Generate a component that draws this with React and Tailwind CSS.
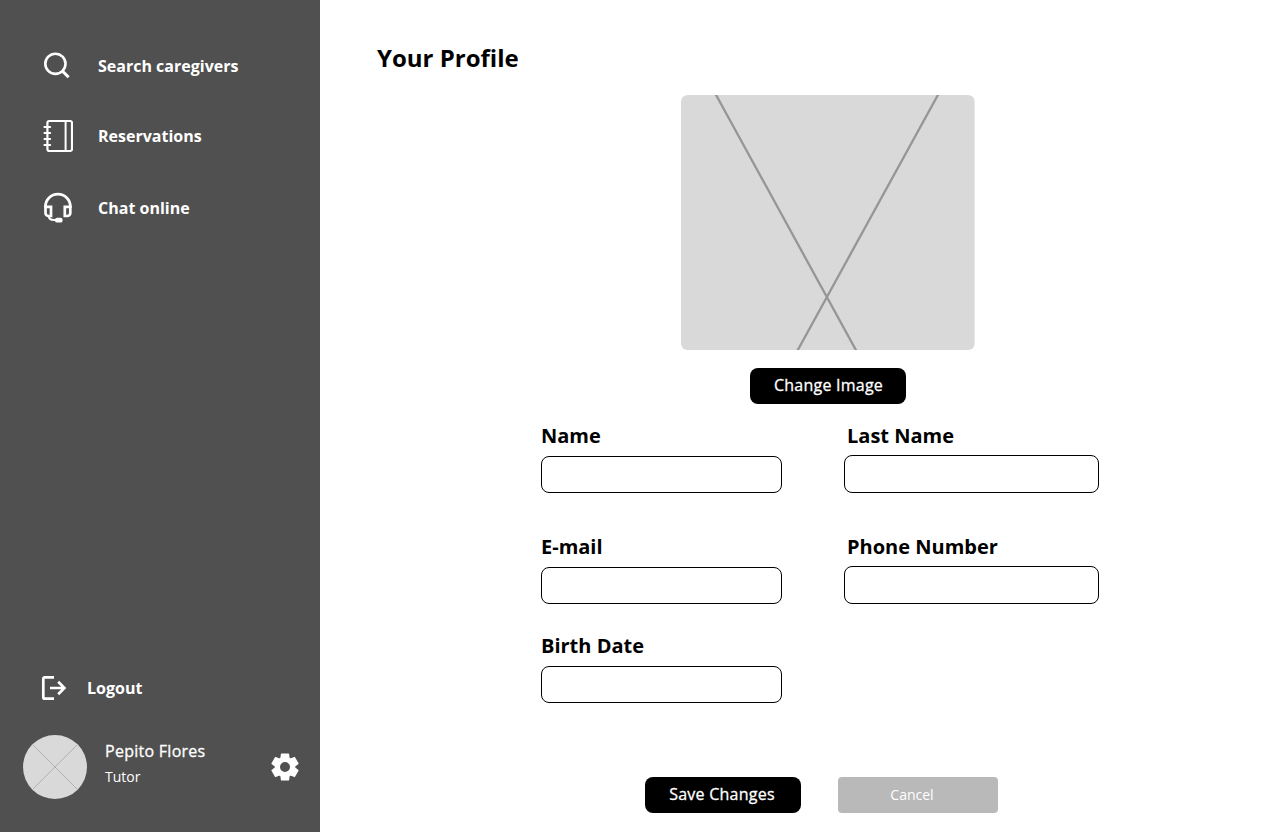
function SearchIcon() {
  return (
    <svg width="32" height="32" viewBox="0 0 32 32" fill="none" stroke="white" strokeWidth="2.6" className="shrink-0">
      <circle cx="14.4" cy="13.8" r="10.1" />
      <path d="M21 20.6 L27.6 27.2" strokeWidth="3" />
    </svg>
  );
}

function NotebookIcon() {
  return (
    <svg width="32" height="36" viewBox="0 0 32 36" fill="none" stroke="white" strokeWidth="2.2" className="shrink-0">
      <rect x="6.4" y="3" width="24.6" height="30" rx="2" />
      <path d="M24.6 3 V33" strokeWidth="2" />
      <path d="M3.4 9 H9.2 M3.4 15 H9.2 M3.4 21 H9.2 M3.4 27 H9.2" strokeWidth="2" strokeLinecap="round" />
    </svg>
  );
}

function HeadsetIcon() {
  return (
    <svg width="32" height="32" viewBox="0 0 32 32" fill="none" stroke="white" strokeWidth="2.7" className="shrink-0">
      <path d="M4.5 16 V14.2 A12.4 12 0 0 1 29.3 14.2 V16" />
      <path d="M4.5 14.8 H10 V24 H7.5 A3 3 0 0 1 4.5 21 Z" />
      <path d="M29.3 14.8 H23.8 V24 H26.3 A3 3 0 0 0 29.3 21 Z" />
      <path d="M7.6 24.2 C8.1 26.8 10 27.9 13 27.9 H17" strokeWidth="2" />
      <rect x="14" y="25.8" width="7.6" height="4.8" rx="2.2" fill="white" stroke="none" />
    </svg>
  );
}

function LogoutIcon() {
  return (
    <svg width="28" height="28" viewBox="0 0 28 28" fill="none" stroke="white" strokeWidth="2.7" className="shrink-0">
      <path d="M14 3.3 H4.8 Q3.3 3.3 3.3 4.8 V23.2 Q3.3 24.7 4.8 24.7 H14" />
      <path d="M10 14 H25 M18.2 7.8 L24.4 14 L18.2 20.2" />
    </svg>
  );
}

function GearIcon() {
  return (
    <svg width="30" height="30" viewBox="-15 -15 30 30" fill="white" className="shrink-0">
      <circle r="7.6" fill="none" stroke="white" strokeWidth="5.2" />
      {[0, 60, 120, 180, 240, 300].map((a) => (
        <path key={a} transform={`rotate(${a})`} d="M-3.5 -13.6 H3.5 Q4 -13.6 4.1 -13.1 L4.8 -8 H-4.8 L-4.1 -13.1 Q-4 -13.6 -3.5 -13.6 Z" />
      ))}
    </svg>
  );
}

function Field({ label, wide }) {
  return (
    <label className="block">
      <span className={wide ? "block pl-[3px] text-xl leading-7 font-bold" : "block text-xl leading-7 font-bold"}>{label}</span>
      <input
        className={
          wide
            ? "mt-[5px] block h-[38px] w-[255px] rounded-lg border border-black bg-white px-3"
            : "mt-1.5 block h-[37px] w-[241px] rounded-lg border border-black bg-white px-3"
        }
      />
    </label>
  );
}

export default function App() {
  return (
    <div className="flex h-[832px] w-[1280px] overflow-hidden bg-white font-['Open_Sans',sans-serif] text-black">
      <aside className="flex w-80 shrink-0 flex-col bg-[#505050] text-white">
        <nav className="flex flex-col pt-[50px] pl-[41px] text-base leading-6 font-bold">
          <a className="flex h-8 items-center gap-[25px]"><SearchIcon />Search caregivers</a>
          <a className="mt-9 flex h-9 items-center gap-[25px]"><NotebookIcon />Reservations</a>
          <a className="mt-[38px] flex h-8 items-center gap-[25px]"><HeadsetIcon />Chat online</a>
        </nav>
        <a className="mt-auto flex items-center gap-[19px] pl-10 text-base leading-6 font-bold"><LogoutIcon />Logout</a>
        <div className="mt-[33px] mb-[33px] flex items-center pr-5 pl-[23px]">
          <svg width="64" height="64" viewBox="0 0 64 64" className="shrink-0">
            <circle cx="32" cy="32" r="32" fill="#d9d9d9" />
            <path d="M9.4 9.4 L54.6 54.6 M54.6 9.4 L9.4 54.6" stroke="#b2b2b2" strokeWidth="1" />
          </svg>
          <div className="ml-[18px] flex-1 pb-2">
            <div className="text-base leading-6 tracking-[0.27px] [-webkit-text-stroke:0.3px_white]">Pepito Flores</div>
            <div className="mt-1 text-sm leading-5">Tutor</div>
          </div>
          <GearIcon />
        </div>
      </aside>
      <main className="flex-1">
        <h1 className="pt-10 pl-[57px] text-2xl leading-9 font-bold">Your Profile</h1>
        <div className="mt-[19px] ml-[221px] w-[573px]">
          <div className="flex flex-col items-center">
            <svg width="294" height="255" viewBox="0 0 294 255" className="rounded-md">
              <rect width="293.6" height="255" rx="6" fill="#d9d9d9" />
              <path d="M34 -2 L176 257 M258 -2 L115.7 257" stroke="#747474" strokeOpacity="0.66" strokeWidth="2.3" />
            </svg>
            <button className="mt-[18px] h-9 w-[156px] rounded-lg bg-black pb-0.5 pl-0.5 text-base leading-6 tracking-[0.24px] text-white [-webkit-text-stroke:0.3px_white]">Change Image</button>
          </div>
          <form className="mt-[18px]">
            <div className="flex gap-[62px]"><Field label="Name" /><Field label="Last Name" wide /></div>
            <div className="mt-10 flex gap-[62px]"><Field label="E-mail" /><Field label="Phone Number" wide /></div>
            <div className="mt-7"><Field label="Birth Date" /></div>
            <div className="mt-[74px] ml-[104px] flex gap-[37px]">
              <button type="button" className="h-9 w-[156px] rounded-lg bg-black pr-0.5 pb-0.5 text-base leading-6 tracking-[0.25px] text-white [-webkit-text-stroke:0.3px_white]">Save Changes</button>
              <button type="button" className="h-9 w-40 rounded bg-[#b9b9b9] pr-3 text-sm leading-5 text-white">Cancel</button>
            </div>
          </form>
        </div>
      </main>
    </div>
  );
}
